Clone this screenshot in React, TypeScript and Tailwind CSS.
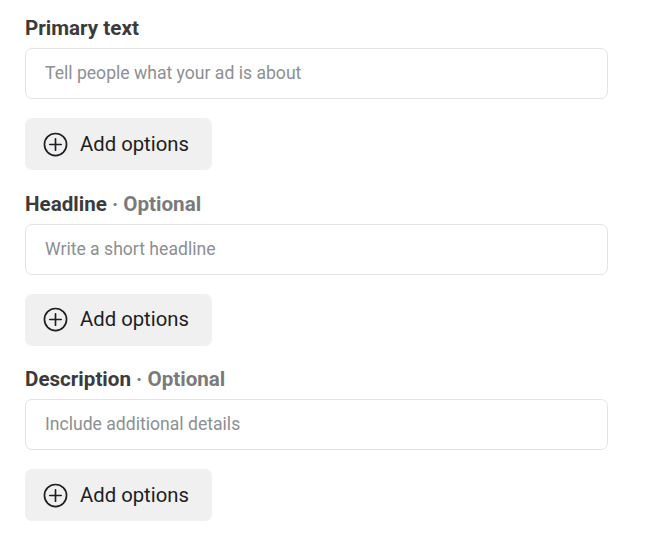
import React from 'react';

const sections = [
  { label: 'Primary text', optional: false, placeholder: 'Tell people what your ad is about' },
  { label: 'Headline', optional: true, placeholder: 'Write a short headline' },
  { label: 'Description', optional: true, placeholder: 'Include additional details' },
];

function PlusCircle() {
  return (
    <svg width="25" height="25" viewBox="0 0 24 24" fill="none" stroke="#1c1e21" strokeWidth="1.6" strokeLinecap="round">
      <circle cx="12" cy="12" r="10.6" />
      <path d="M12 6.5v11M6.5 12h11" />
    </svg>
  );
}

export default function App() {
  return (
    <div className="min-h-[534px] bg-white pl-[25px] pr-[57px] pt-[14px] font-['Roboto',sans-serif]">
      {sections.map((s) => (
        <div key={s.label} className="mb-[19.5px] flex flex-col">
          <div className="h-[28px] text-[20.6px] font-bold leading-[28px] text-[#3b3b3b]">
            {s.label}
            {s.optional && <span className="text-[#7a7a7a]"> · Optional</span>}
          </div>
          <div className="mt-[6px] flex h-[51px] items-center rounded-[7px] border border-[#e2e3e5] px-[19px] text-[17.6px] text-[#8d8f93]">
            {s.placeholder}
          </div>
          <button className="mt-[19px] flex h-[52px] w-[187px] items-center gap-[12px] rounded-[7px] bg-[#f0f0f0] pl-[18px] text-[20.3px] text-[#1c1e21]">
            <PlusCircle />
            Add options
          </button>
        </div>
      ))}
    </div>
  );
}
